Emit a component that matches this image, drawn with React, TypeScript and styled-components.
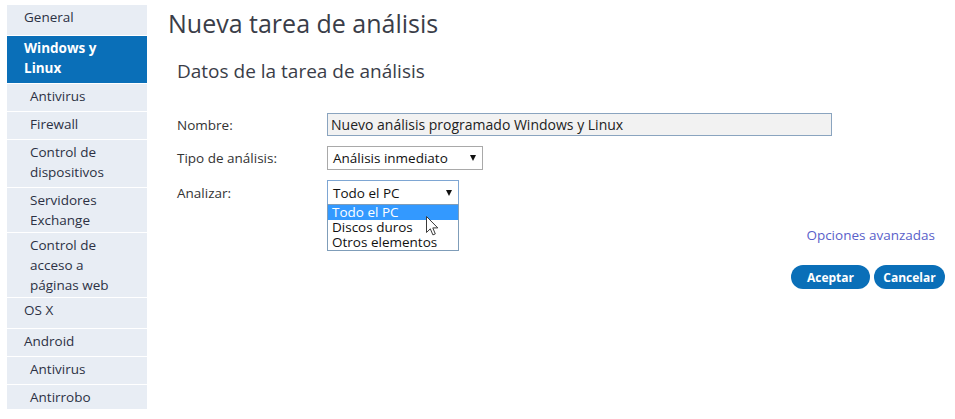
import React from 'react'
import styled, { createGlobalStyle } from 'styled-components'

const GlobalStyle = createGlobalStyle`
    html, body {
        margin     : 0;
        padding    : 0;
        background : #ffffff;
    }
    body {
        font-family : "Open Sans", "Liberation Sans", sans-serif;
        font-size   : 13.5px;
        color       : #333333;
    }
`

type NavEntry = { label: string; sub?: boolean; active?: boolean; pb: number }

const navItems: NavEntry[] = [
    { label: 'General', pb: 8 },
    { label: 'Windows y Linux', active: true, pb: 5 },
    { label: 'Antivirus', sub: true, pb: 5 },
    { label: 'Firewall', sub: true, pb: 5 },
    { label: 'Control de dispositivos', sub: true, pb: 5 },
    { label: 'Servidores Exchange', sub: true, pb: 2 },
    { label: 'Control de acceso a páginas web', sub: true, pb: 2 },
    { label: 'OS X', pb: 8 },
    { label: 'Android', pb: 5 },
    { label: 'Antivirus', sub: true, pb: 5 },
    { label: 'Antirrobo', sub: true, pb: 2 },
]

const analyzeOptions = ['Todo el PC', 'Discos duros', 'Otros elementos']

const App = () => {
    return (
        <>
            <GlobalStyle />
            <Page>
                <Sidebar>
                    {navItems.map((item, i) => (
                        <NavItem key={i} $sub={item.sub} $active={item.active} $pb={item.pb}>
                            {item.label}
                        </NavItem>
                    ))}
                </Sidebar>

                <Main>
                    <Title>Nueva tarea de análisis</Title>
                    <Section>
                        <Subtitle>Datos de la tarea de análisis</Subtitle>
                        <Form>
                            <Label>Nombre:</Label>
                            <TextInput readOnly value="Nuevo análisis programado Windows y Linux" />

                            <Label>Tipo de análisis:</Label>
                            <div>
                                <Select $w={156} $h={24}>
                                    <span>Análisis inmediato</span>
                                    <Arrow />
                                </Select>
                            </div>

                            <Label>Analizar:</Label>
                            <SelectWrap>
                                <Select $w={132} $h={25} $focused>
                                    <span>Todo el PC</span>
                                    <Arrow />
                                </Select>
                                <DropList>
                                    {analyzeOptions.map((opt, i) => (
                                        <DropOption key={opt} $selected={i === 0}>{opt}</DropOption>
                                    ))}
                                </DropList>
                                <Pointer width="13" height="20" viewBox="0 0 13 20">
                                    <path
                                        d="M0.5 0.5 L0.5 16.5 L4.3 12.8 L6.9 18.9 L9.3 17.9 L6.8 11.9 L11.8 11.9 Z"
                                        fill="#ffffff"
                                        stroke="#3a3a3a"
                                        strokeWidth="1"
                                        strokeLinejoin="round"
                                    />
                                </Pointer>
                            </SelectWrap>
                        </Form>
                        <LinkRow>
                            <AdvLink href="#">Opciones avanzadas</AdvLink>
                        </LinkRow>
                    </Section>
                    <Actions>
                        <PillButton $minW={79}>Aceptar</PillButton>
                        <PillButton $minW={71}>Cancelar</PillButton>
                    </Actions>
                </Main>
            </Page>
        </>
    )
}

export default App

const Page = styled.div`
    display     : flex;
    align-items : flex-start;
    padding     : 5px 10px 0 7px;
`

const Sidebar = styled.nav`
    width          : 140px;
    flex-shrink    : 0;
    display        : flex;
    flex-direction : column;
    gap            : 1px;
`

const NavItem = styled.div<{ $sub?: boolean; $active?: boolean; $pb: number }>`
    padding          : 2px 20px ${p => p.$pb}px ${p => (p.$sub ? 23 : 17)}px;
    line-height      : 20px;
    font-size        : 13.5px;
    background-color : ${p => (p.$active ? '#0a6fb8' : '#e8edf4')};
    color            : ${p => (p.$active ? '#ffffff' : '#2c3144')};
    font-weight      : ${p => (p.$active ? 700 : 400)};
`

const Main = styled.main`
    flex           : 1;
    margin-left    : 21px;
    display        : flex;
    flex-direction : column;
`

const Title = styled.h1`
    margin      : 1px 0 0;
    font-size   : 25px;
    line-height : 34px;
    font-weight : 400;
    color       : #3a3d48;
`

const Section = styled.section`
    padding-left  : 9px;
    padding-right : 10px;
`

const Subtitle = styled.h2`
    margin      : 18px 0 0;
    font-size   : 19px;
    line-height : 26px;
    font-weight : 400;
    color       : #3a3d48;
`

const Form = styled.div`
    display               : grid;
    grid-template-columns : 150px 1fr;
    row-gap               : 10px;
    align-items           : center;
    margin-top            : 29px;
`

const Label = styled.label`
    font-size   : 13.5px;
    line-height : 20px;
    color       : #333333;
`

const TextInput = styled.input`
    box-sizing  : border-box;
    width       : 505px;
    height      : 23px;
    padding     : 0 3px;
    border      : 1px solid #8aa4bf;
    background  : #f2f2f2;
    font-family : "Open Sans", "Liberation Sans", sans-serif;
    font-size   : 14px;
    color       : #222222;
    outline     : none;
`

const SelectWrap = styled.div`
    position : relative;
`

const Select = styled.div<{ $w: number; $h: number; $focused?: boolean }>`
    box-sizing      : border-box;
    width           : ${p => p.$w}px;
    height          : ${p => p.$h}px;
    display         : flex;
    align-items     : center;
    justify-content : space-between;
    padding         : 0 6px 0 5px;
    border          : 1px solid ${p => (p.$focused ? '#7ea6d3' : '#a9a9a9')};
    background      : #ffffff;
    font-size       : 13.5px;
    color           : #111111;
`

const Arrow = styled.i`
    width        : 0;
    height       : 0;
    border-left  : 3.5px solid transparent;
    border-right : 3.5px solid transparent;
    border-top   : 6px solid #111111;
`

const DropList = styled.ul`
    position   : absolute;
    left       : 0;
    top        : calc(100% - 1px);
    box-sizing : border-box;
    width      : 132px;
    margin     : 0;
    padding    : 0;
    list-style : none;
    border     : 1px solid #7f9db9;
    background : #ffffff;
    z-index    : 5;
`

const DropOption = styled.li<{ $selected?: boolean }>`
    height      : 15px;
    line-height : 15px;
    padding     : 0 4px;
    font-size   : 13.5px;
    background  : ${p => (p.$selected ? '#3399ff' : 'transparent')};
    color       : ${p => (p.$selected ? '#ffffff' : '#111111')};
`

const Pointer = styled.svg`
    position : absolute;
    left     : 99px;
    top      : 36px;
    z-index  : 6;
`

const LinkRow = styled.div`
    display         : flex;
    justify-content : flex-end;
    margin-top      : 20px;
`

const AdvLink = styled.a`
    font-size       : 13.5px;
    line-height     : 20px;
    color           : #5a5fca;
    text-decoration : none;
`

const Actions = styled.div`
    display         : flex;
    justify-content : flex-end;
    gap             : 4px;
    margin-top      : 20px;
`

const PillButton = styled.button<{ $minW: number }>`
    min-width     : ${p => p.$minW}px;
    height        : 24px;
    padding       : 0 8px;
    border        : 0;
    border-radius : 12px;
    background    : #0a6fb8;
    color         : #ffffff;
    font-family   : "Open Sans", "Liberation Sans", sans-serif;
    font-size     : 12px;
    font-weight   : 700;
    cursor        : pointer;
`
